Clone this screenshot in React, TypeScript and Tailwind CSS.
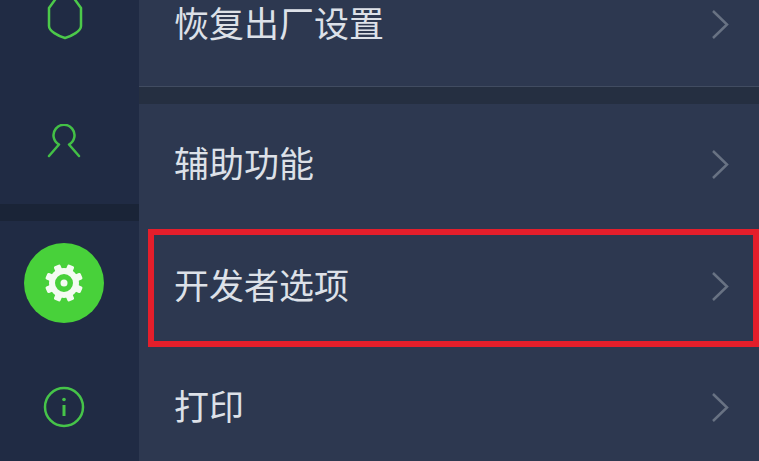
import React from 'react';

const Chevron = () => (
  <svg width="18" height="31" viewBox="0 0 18 31" fill="none" className="shrink-0">
    <path d="M2 2 L16 15.500 L2 29" stroke="#687283" strokeWidth="2.500" />
  </svg>
);

const Row = ({ label, className = '', children }: { label: string; className?: string; children?: React.ReactNode }) => (
  <div className={`relative flex shrink-0 items-center justify-between pl-[35px] pr-[30px] ${className}`}>
    <span className="mb-[6px] text-[35px] leading-none text-[#dde1e8]">{label}</span>
    <Chevron />
    {children}
  </div>
);

// top of the shield runs off the screen, so the path goes past the svg edge
const Shield = () => (
  <svg width="38" height="42" viewBox="0 0 38 42" fill="none">
    <path d="M3 10 L11 -1 H27 L35 10 V28 C35 33 26 38 19 40 C12 38 3 33 3 28 Z" stroke="#4cc94a" strokeWidth="2.500" strokeLinejoin="round" />
  </svg>
);

const Person = () => (
  <svg width="36" height="36" viewBox="0 0 36 36" fill="none">
    <path d="M3 32 L13 20.500 A10.500 10.500 0 1 1 23 20.500 L33 32" stroke="#43c046" strokeWidth="2.500" strokeLinecap="round" strokeLinejoin="round" />
  </svg>
);

const Gear = () => (
  <svg width="40" height="40" viewBox="0 0 40 40">
    {[0, 45, 90, 135, 180, 225, 270, 315].map((deg) => (
      <rect key={deg} x="16.500" y="1" width="7" height="8" rx="1.500" fill="#f4fbf2" transform={`rotate(${deg + 22.5} 20 20)`} />
    ))}
    <circle cx="20" cy="20" r="12" fill="none" stroke="#f4fbf2" strokeWidth="6" />
    <circle cx="20" cy="20" r="3.500" fill="#f4fbf2" />
  </svg>
);

const Info = () => (
  <svg width="42" height="42" viewBox="0 0 42 42" fill="none">
    <circle cx="21" cy="21" r="19" stroke="#46c449" strokeWidth="2.500" />
    <circle cx="21" cy="13.500" r="1.800" fill="#46c449" />
    <path d="M21 19 V30" stroke="#46c449" strokeWidth="3" />
  </svg>
);

export default function App() {
  return (
    <div className="flex h-[461px] w-[759px] overflow-hidden bg-[#202b44] font-['Noto_Sans_CJK_SC','Noto_Sans',sans-serif]">
      <div className="flex w-[139px] shrink-0 flex-col bg-[#202b44]">
        <div className="flex h-[40px] items-end justify-center pr-[9px]">
          <Shield />
        </div>
        <div className="mt-[84px] flex justify-center pr-[11px]">
          <Person />
        </div>
        <div className="mt-[44px] h-[17px] bg-[#1a2437]" />
        <div className="ml-[24px] mt-[22px] flex h-[80px] w-[80px] items-center justify-center rounded-full bg-[#48d13a]">
          <Gear />
        </div>
        <div className="mt-[63px] flex justify-center pr-[11px]">
          <Info />
        </div>
      </div>
      <div className="flex min-w-0 flex-1 flex-col bg-[#2d3850]">
        <Row label="恢复出厂设置" className="h-[87px] border-b border-[#414c61] pb-[38px]" />
        <div className="h-[17px] shrink-0 bg-[#252f41]" />
        <Row label="辅助功能" className="h-[121px]" />
        <Row label="开发者选项" className="h-[122px]">
          <div className="absolute bottom-0 left-[9px] right-0 top-[4px] border-[6px] border-[#e41e2b]" />
        </Row>
        <Row label="打印" className="h-[121px]" />
      </div>
    </div>
  );
}
